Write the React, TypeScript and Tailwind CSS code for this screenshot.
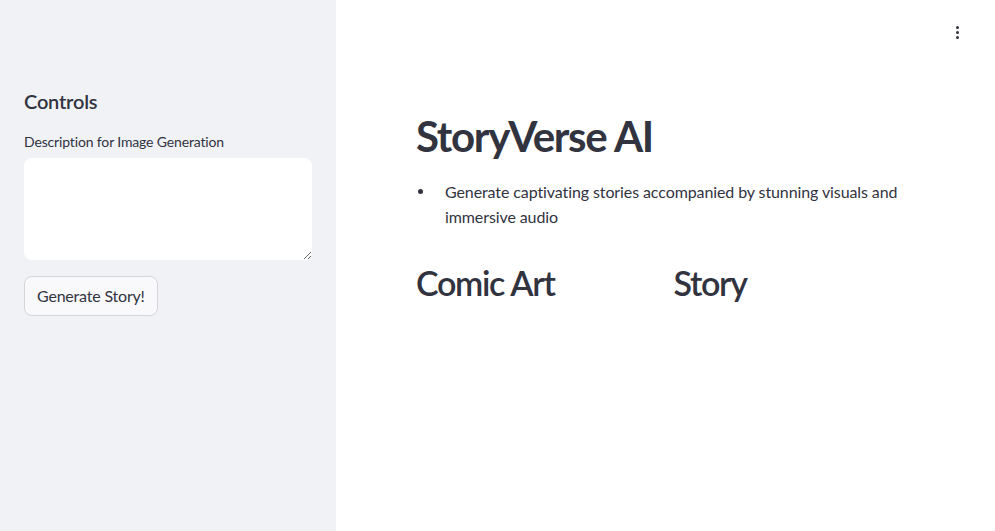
import React from "react";

export default function App() {
  return (
    <div className="flex h-[531px] w-[995px] overflow-hidden bg-white text-[#31333f]" style={{ fontFamily: "Lato, 'Noto Sans', sans-serif" }}>
      <aside className="flex w-[336px] shrink-0 flex-col bg-[#f0f2f6] px-6 pt-[85px]">
        <h2 className="text-[20px] font-semibold leading-[32px] tracking-[-0.2px]">Controls</h2>
        <label className="mt-[16px] text-[14px] leading-[18px] tracking-[-0.15px]">Description for Image Generation</label>
        <textarea className="mt-[7px] h-[102px] w-full resize-y rounded-lg bg-white outline-none" />
        <div className="mt-4">
          <button className="h-10 rounded-lg border border-[#d5d6d9] bg-[#f9f9fb] px-3 text-[16px] tracking-[-0.2px]">Generate Story!</button>
        </div>
      </aside>
      <main className="relative flex-1 px-20 pt-[108px]">
        <button className="absolute right-[28px] top-[22px] flex h-5 w-5 flex-col items-center justify-center gap-[2px]">
          <span className="h-[3px] w-[3px] rounded-full bg-[#31333f]" />
          <span className="h-[3px] w-[3px] rounded-full bg-[#31333f]" />
          <span className="h-[3px] w-[3px] rounded-full bg-[#31333f]" />
        </button>
        <h1 className="text-[42px] font-bold leading-[56px] tracking-[-1.3px]">StoryVerse AI</h1>
        <ul className="mt-[15px] text-[16px] leading-[25px] tracking-[-0.1px]">
          <li className="flex">
            <span className="flex h-[25px] w-[29px] shrink-0 items-center pl-[2px]">
              <span className="h-[5px] w-[5px] rounded-full bg-[#31333f]" />
            </span>
            <span>Generate captivating stories accompanied by stunning visuals and immersive audio</span>
          </li>
        </ul>
        <div className="mt-[30px] grid grid-cols-2 gap-4">
          <h2 className="text-[34px] font-semibold leading-[48px] tracking-[-1.3px]">Comic Art</h2>
          <h2 className="text-[34px] font-semibold leading-[48px] tracking-[-1.3px]">Story</h2>
        </div>
      </main>
    </div>
  );
}
